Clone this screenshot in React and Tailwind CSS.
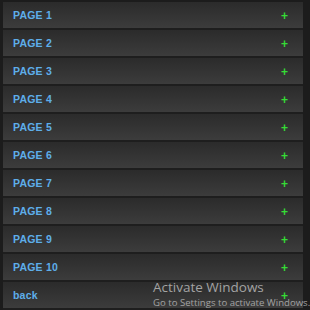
import React from 'react';

const pages = ['PAGE 1', 'PAGE 2', 'PAGE 3', 'PAGE 4', 'PAGE 5', 'PAGE 6', 'PAGE 7', 'PAGE 8', 'PAGE 9', 'PAGE 10', 'back'];

const Row = ({ label }) => (
  <div className="h-[28px] flex items-center justify-between pl-[10px] pr-[15px] bg-gradient-to-b from-[#2b2b2b] to-[#3c3c3c] border-b-2 border-[#1e1e1e]">
    <span className="text-[10.5px] font-bold text-[#5eaeea] tracking-[0.2px] pt-[1px]">{label}</span>
    <span className="text-[12px] font-bold text-[#35dc35] leading-none pt-[1px]">+</span>
  </div>
);

export default function App() {
  return (
    <div className="relative w-[310px] h-[310px] overflow-hidden bg-[#1c1c1c] pl-[3px] pr-[7px] pt-[2px] font-['Liberation_Sans',Arial,sans-serif]">
      {pages.map(p => (
        <Row key={p} label={p} />
      ))}
      <div className="absolute left-[153px] top-[279px] text-[#a3a3a3] font-['Open_Sans','Noto_Sans',sans-serif] whitespace-nowrap pointer-events-none">
        <div className="text-[13.5px] leading-[17px]">Activate Windows</div>
        <div className="text-[9.6px] leading-[13px]">Go to Settings to activate Windows.</div>
      </div>
    </div>
  );
}
